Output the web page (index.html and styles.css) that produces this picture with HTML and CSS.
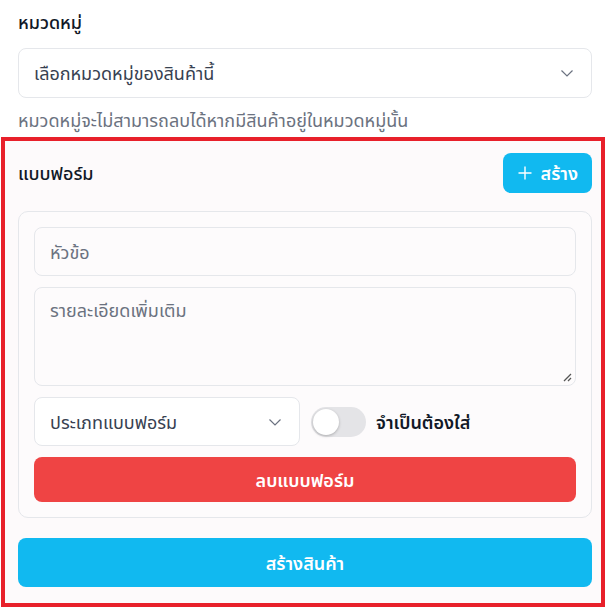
FILE: index.html
```html
<!DOCTYPE html>
<html lang="th">
<head>
<meta charset="utf-8">
<link rel="stylesheet" href="styles.css">
</head>
<body>
<div class="top">
  <div class="label">หมวดหมู่</div>
  <div class="select select-wide">
    <span>เลือกหมวดหมู่ของสินค้านี้</span>
    <svg class="chev" width="16" height="16" viewBox="0 0 16 16"><path d="M2.5 5.5 L8 11 L13.5 5.5" fill="none" stroke="#6b7280" stroke-width="1.2"/></svg>
  </div>
  <div class="help">หมวดหมู่จะไม่สามารถลบได้หากมีสินค้าอยู่ในหมวดหมู่นั้น</div>
</div>
<section class="forms">
  <div class="forms-head">
    <div class="title">แบบฟอร์ม</div>
    <button class="btn-add"><svg width="16" height="16" viewBox="0 0 16 16"><path d="M8 1.5 V14.5 M1.5 8 H14.5" stroke="#fff" stroke-width="1.4" fill="none"/></svg><span>สร้าง</span></button>
  </div>
  <div class="card">
    <div class="input">หัวข้อ</div>
    <div class="textarea">รายละเอียดเพิ่มเติม
      <svg class="grip" width="10" height="10" viewBox="0 0 10 10"><path d="M9 2 L2 9 M9 6 L6 9" stroke="#555" stroke-width="1.3" fill="none"/></svg>
    </div>
    <div class="row">
      <div class="select select-type">
        <span>ประเภทแบบฟอร์ม</span>
        <svg class="chev" width="16" height="16" viewBox="0 0 16 16"><path d="M2.5 5.5 L8 11 L13.5 5.5" fill="none" stroke="#6b7280" stroke-width="1.2"/></svg>
      </div>
      <div class="toggle"><div class="knob"></div></div>
      <div class="req">จำเป็นต้องใส่</div>
    </div>
    <button class="btn-del">ลบแบบฟอร์ม</button>
  </div>
  <button class="btn-create">สร้างสินค้า</button>
</section>
</body>
</html>
```
FILE: styles.css
```css
* { box-sizing: border-box; }
html, body { margin: 0; padding: 0; background: #fff; }
body {
  font-family: "Noto Sans", "Noto Sans Thai", "Noto Sans CJK SC", sans-serif;
  font-size: 18px;
  line-height: 24px;
  color: #1f2937;
  width: 612px;
}
.top { padding: 10px 20px 0 18px; }
.label { font-weight: 500; color: #111827; }
.select {
  display: flex;
  align-items: center;
  justify-content: space-between;
  border: 1px solid #e5e7eb;
  border-radius: 8px;
  background: #fff;
  height: 50px;
  padding: 0 16px 0 15px;
  color: #374151;
}
.select-wide { margin-top: 14px; }
.chev { flex: none; }
.help { margin-top: 10px; color: #6b7280; }
.forms {
  margin: 5px 0 0 1px;
  width: 604px;
  height: 470px;
  border: 4px solid #e8202a;
  background: #fdfafb;
  padding: 12px 9px 15px 13px;
  display: flex;
  flex-direction: column;
}
.forms-head { display: flex; justify-content: space-between; align-items: center; height: 40px; }
.title { font-weight: 500; color: #111827; }
.btn-add {
  display: flex; align-items: center; gap: 8px;
  height: 40px; padding: 0 14px 0 14px;
  border: none; border-radius: 8px;
  background: #11b9f0; color: #fff;
  font: inherit; font-weight: 600;
}
.card {
  margin-top: 18px;
  border: 1px solid #e5e7eb;
  border-radius: 10px;
  padding: 15px;
  display: flex; flex-direction: column; gap: 11px;
  background: #fdfbfc;
}
.input, .textarea {
  border: 1px solid #e5e7eb;
  border-radius: 8px;
  background: #fdfbfc;
  color: #6b7280;
  padding: 0 15px;
}
.input { height: 49px; display: flex; align-items: center; }
.textarea { height: 99px; padding-top: 10px; position: relative; }
.grip { position: absolute; right: 3px; bottom: 3px; }
.row { display: flex; align-items: center; }
.select-type { width: 266px; height: 49px; }
.toggle {
  margin-left: 11px;
  width: 55px; height: 30px;
  border-radius: 15px;
  background: #e4e4e7;
  position: relative;
}
.knob {
  position: absolute; left: 2px; top: 2px;
  width: 26px; height: 26px; border-radius: 50%;
  background: #fff;
  box-shadow: 0 1px 3px rgba(0,0,0,0.25);
}
.req { margin-left: 10px; font-weight: 600; color: #111827; }
.btn-del {
  height: 45px; border: none; border-radius: 8px;
  background: #ef4444; color: #fff;
  font: inherit; font-weight: 600;
}
.btn-create {
  margin-top: 20px;
  height: 49px; border: none; border-radius: 8px;
  background: #11b9f0; color: #fff;
  font: inherit; font-weight: 600;
}
```
